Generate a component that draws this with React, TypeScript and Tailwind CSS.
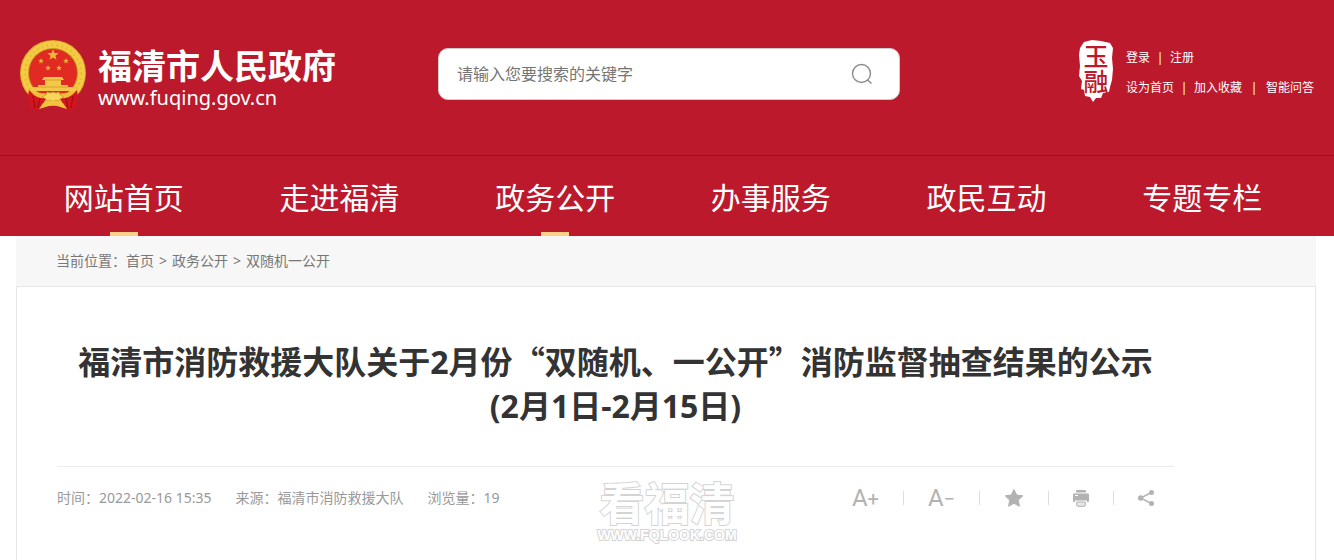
import React from 'react';

const navItems = [
  { label: '网站首页', active: true },
  { label: '走进福清', active: false },
  { label: '政务公开', active: true },
  { label: '办事服务', active: false },
  { label: '政民互动', active: false },
  { label: '专题专栏', active: false },
];

const Star: React.FC<{ x: number; y: number; size: number }> = ({ x, y, size }) => (
  <path
    transform={`translate(${x} ${y}) scale(${size})`}
    d="M0 -1L.25 -.33L.95 -.31L.4 .12L.59 .81L0 .42L-.59 .81L-.4 .12L-.95 -.31L-.25 -.33Z"
    fill="#f0b63a"
  />
);

const Emblem: React.FC = () => (
  <svg viewBox="0 0 66 70" className="h-[70px] w-[66px] shrink-0" aria-hidden="true">
    <circle cx="33" cy="33" r="33" fill="#e0a92a" />
    <circle cx="33" cy="33" r="32" fill="#f4cb45" />
    <circle cx="33" cy="33" r="28" fill="none" stroke="#ecbd38" strokeWidth="3" strokeDasharray="2 3" />
    <circle cx="33" cy="33" r="25" fill="#c98f1f" />
    <circle cx="33" cy="33" r="24" fill="#e02a22" />
    <Star x={33} y={15} size={6} />
    <Star x={21} y={21} size={3} />
    <Star x={46} y={21} size={3} />
    <Star x={28} y={28} size={3} />
    <Star x={39} y={28} size={3} />
    <path d="M24 37h18l2 3h-3v5h-16v-5h-3zM18 45h30v2h5v4H13v-4h5z" fill="#f3c84a" />
    <path d="M25 40h16M18 47h30" stroke="#d99d25" />
    <path d="M9 50c8 5 40 5 48 0v6c-10 6-38 6-48 0z" fill="#efbf38" />
    <path d="M9 50l5 5c6 4 9 4 13 2l-7 12h-5l-2-2-4 2 1-8-2-4z" fill="#d3151d" />
    <path d="M57 50l-5 5c-6 4-9 4-13 2l7 12h5l2-2 4 2-1-8 2-4z" fill="#d3151d" />
    <path d="M13 56l2 12M20 58l-2 10M53 56l-2 12M46 58l2 10" stroke="#970c15" />
    <path
      d="M33 52l3 1 3-1 1 3 4 2-4 2-1 2-3-1-3 1-3-1-3 1-1-2-4-2 4-2 1-3 3 1z"
      fill="#f8d65c"
      stroke="#cf9526"
      strokeWidth=".7"
    />
    <path d="M23 63l10-3 10 3 4 6-10-3-4-1-4 1-10 3z" fill="#f1c43e" />
  </svg>
);

const Seal: React.FC = () => (
  <svg viewBox="0 0 34 62" className="h-[62px] w-[34px] shrink-0 overflow-visible" aria-hidden="true">
    <path
      d="M5 2L13 0L22 1L31 3L34 8L33 18L34 29L33 40L31 47L30 52L24 53L22 58L17 58L14 62L11 57L6 56L5 50L2 49L3 41L0 36L1 26L0 15L1 8Z"
      fill="#fff"
    />
    <text x="17" y="26" textAnchor="middle" fontSize="25" fill="#bc1a2c" className="font-['Noto_Sans_CJK_SC',sans-serif] font-medium">
      玉
    </text>
    <text x="17" y="51" textAnchor="middle" fontSize="25" fill="#bc1a2c" className="font-['Noto_Sans_CJK_SC',sans-serif] font-medium">
      融
    </text>
  </svg>
);

const Header: React.FC = () => (
  <header className="bg-[#bc1a2c] text-white">
    <div className="flex h-[155px] items-start px-5">
      <a href="#" className="mt-10 flex w-80 shrink-0 gap-3">
        <Emblem />
        <div className="pt-1">
          <div className="text-[34px] leading-[44px] font-bold whitespace-nowrap">福清市人民政府</div>
          <div className="text-xl leading-5">www.fuqing.gov.cn</div>
        </div>
      </a>

      <form className="mt-12 ml-[98px] flex h-[52px] w-[462px] items-center rounded-[10px] border border-[#ccc] bg-white pr-6 pl-[18px]">
        <input
          type="text"
          aria-label="搜索"
          placeholder="请输入您要搜索的关键字"
          className="min-w-0 flex-1 text-base text-gray-800 outline-none placeholder:text-[#757575]"
        />
        <button type="button" aria-label="搜索" className="p-[2px]">
          <svg viewBox="0 0 22 22" className="h-[22px] w-[22px]" fill="none" stroke="#8a8a8a" strokeWidth="1.4">
            <circle cx="10.5" cy="10.5" r="9" />
            <path d="M16.5 17L20.5 20.5" />
          </svg>
        </button>
      </form>

      <div className="mt-10 ml-auto flex shrink-0 gap-[13px]">
        <Seal />
        <div className="pt-[3px] text-xs leading-[30px]">
          <div className="flex">
            <a href="#">登录</a>
            <span className="w-5 text-center">|</span>
            <a href="#">注册</a>
          </div>
          <div className="flex">
            <a href="#">设为首页</a>
            <span className="w-5 text-center">|</span>
            <a href="#">加入收藏</a>
            <span className="w-6 text-center">|</span>
            <a href="#">智能问答</a>
          </div>
        </div>
      </div>
    </div>

    <nav className="border-t border-[#9c1020] pr-6 pl-4">
      <ul className="grid grid-cols-6">
        {navItems.map((item) => (
          <li key={item.label}>
            <a href="#" className="flex h-20 flex-col items-center text-3xl">
              <span className="flex flex-1 items-center pt-2">{item.label}</span>
              <span className={item.active ? 'h-1 w-7 bg-[#fdd185]' : 'h-1 w-7'} />
            </a>
          </li>
        ))}
      </ul>
    </nav>
  </header>
);

const Breadcrumb: React.FC = () => (
  <div className="flex h-[50px] items-center gap-[5px] bg-[#f7f7f7] px-10 text-sm text-[#777]">
    <span>
      当前位置：<a href="#">首页</a>
    </span>
    <span>&gt;</span>
    <a href="#">政务公开</a>
    <span>&gt;</span>
    <a href="#">双随机一公开</a>
  </div>
);

const Divider: React.FC = () => <span className="h-[14px] w-px bg-[#ddd]" />;

const Tools: React.FC = () => (
  <div className="flex items-center gap-6 pr-5 text-[#b2b2b2]">
    <button type="button" className="font-['Roboto',sans-serif] text-2xl leading-6">
      A<span className="text-xl leading-6">+</span>
    </button>
    <Divider />
    <button type="button" className="font-['Roboto',sans-serif] text-2xl leading-6">
      A<span className="text-xl leading-6">−</span>
    </button>
    <Divider />
    <button type="button" aria-label="收藏">
      <svg viewBox="0 0 20 20" className="h-5 w-5" fill="currentColor" stroke="currentColor" strokeLinejoin="round">
        <path d="M10 1.5L12.6 7L18.8 7.8L14.3 12.1L15.4 18.3L10 15.3L4.6 18.3L5.7 12.1L1.2 7.8L7.4 7Z" />
      </svg>
    </button>
    <Divider />
    <button type="button" aria-label="打印">
      <svg viewBox="0 0 16 17" className="h-[17px] w-4" fill="currentColor">
        <path d="M4 0h8a1 1 0 0 1 1 1v1.5H3V1a1 1 0 0 1 1-1z" />
        <path d="M1 3.5h14a1 1 0 0 1 1 1V11a1 1 0 0 1-1 1h-1v-1.5H2V12H1a1 1 0 0 1-1-1V4.500a1 1 0 0 1 1-1z" />
        <path d="M3.700 12h8.600v3.300a1 1 0 0 1-1 1H4.700a1 1 0 0 1-1-1z" fill="#e6e6e6" stroke="currentColor" />
        <path d="M2 5.500h3" stroke="#fff" />
      </svg>
    </button>
    <Divider />
    <button type="button" aria-label="分享">
      <svg viewBox="0 0 16 16" className="h-4 w-4" fill="currentColor">
        <path d="M13.5 2.5L2.5 8L13.5 13.5" fill="none" stroke="currentColor" strokeWidth="1.4" />
        <circle cx="2.7" cy="8" r="2.7" />
        <circle cx="13.5" cy="2.6" r="2.5" />
        <circle cx="13.5" cy="13.4" r="2.5" />
      </svg>
    </button>
  </div>
);

const Watermark: React.FC = () => (
  <div className="pointer-events-none absolute bottom-[18px] left-1/2 -translate-x-1/2 text-center font-bold text-white [-webkit-text-stroke:2px_#d4d4d4] [paint-order:stroke]">
    <div className="text-[45px] leading-[48px]">看福清</div>
    <div className="font-['Liberation_Sans',sans-serif] text-sm leading-[14px]">WWW.FQLOOK.COM</div>
  </div>
);

const App: React.FC = () => (
  <div className="relative flex min-h-screen flex-col bg-white font-['Noto_Sans','Noto_Sans_CJK_SC',sans-serif]">
    <Header />
    <main className="mr-[18px] ml-4 flex flex-1 flex-col">
      <Breadcrumb />
      <article className="flex-1 border-x border-t border-[#e6e6e6] pr-[141px] pl-10">
        <h1 className="border-b border-[#ececec] pt-[51px] pb-[38px] text-center text-[32px] leading-[44px] font-bold text-[#333]">
          福清市消防救援大队关于2月份<span className="font-['Noto_Sans_CJK_SC',sans-serif]">“</span>双随机、一公开
          <span className="font-['Noto_Sans_CJK_SC',sans-serif]">”</span>消防监督抽查结果的公示
          <br />
          (2月1日-2月15日)
        </h1>
        <div className="flex h-[62px] items-center justify-between">
          <div className="flex gap-6 text-sm text-[#999]">
            <span>时间：2022-02-16 15:35</span>
            <span>来源：福清市消防救援大队</span>
            <span>浏览量：19</span>
          </div>
          <Tools />
        </div>
      </article>
    </main>
    <Watermark />
  </div>
);

export default App;
